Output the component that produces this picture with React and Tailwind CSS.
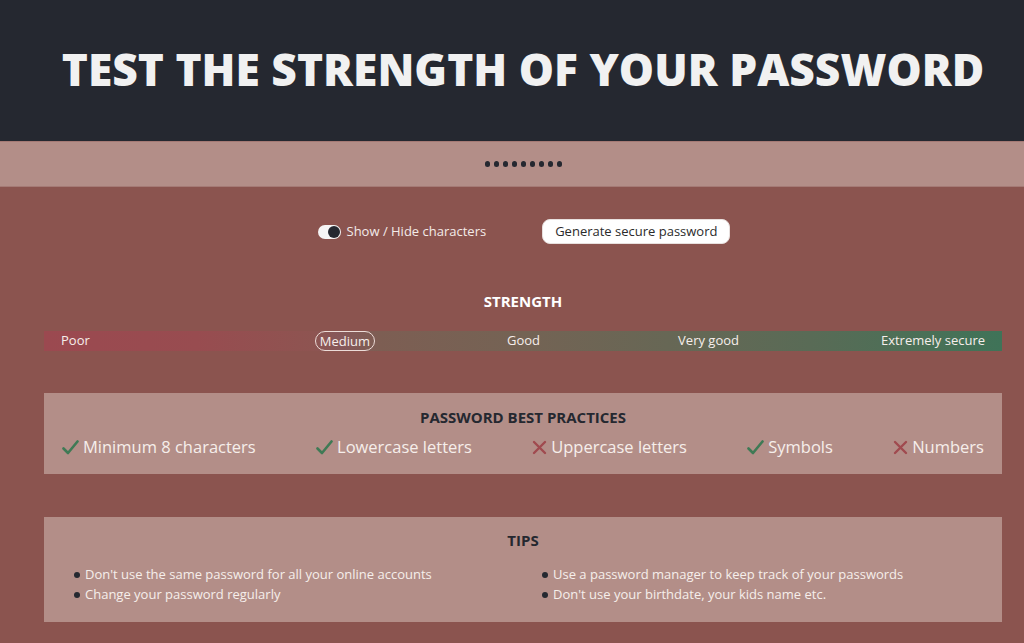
import React from "react";

const font = { fontFamily: '"Open Sans", "Noto Sans", sans-serif' };

function Check() {
  return (
    <svg width="17" height="15" viewBox="0 0 17 15" className="shrink-0">
      <path d="M1.5 8.5 L6 13 L15.5 1.5" fill="none" stroke="#3f7a55" strokeWidth="2.6" strokeLinecap="round" strokeLinejoin="round" />
    </svg>
  );
}

function Cross() {
  return (
    <svg width="15" height="15" viewBox="0 0 15 15" className="shrink-0">
      <path d="M2 2 L13 13 M13 2 L2 13" fill="none" stroke="#a04a4f" strokeWidth="2.4" strokeLinecap="round" />
    </svg>
  );
}

function Rule({ ok, label }) {
  return (
    <div className="flex items-center gap-[4px] text-[16.5px] text-[#f6eeeb]">
      {ok ? <Check /> : <Cross />}
      <span>{label}</span>
    </div>
  );
}

function Tip({ children }) {
  return (
    <li className="flex items-center gap-[5px] h-[20px]">
      <span className="w-[6px] h-[6px] rounded-full bg-[#252830] shrink-0" />
      <span>{children}</span>
    </li>
  );
}

export default function App() {
  return (
    <div className="w-[1024px] h-[643px] overflow-hidden bg-[#8b544f]" style={font}>
      <header className="h-[141px] bg-[#252830] flex items-center justify-center pl-[22px] pb-[2px]">
        <h1 className="text-[44.3px] font-extrabold text-[#f1f1f1] tracking-[0px] leading-none">
          TEST THE STRENGTH OF YOUR PASSWORD
        </h1>
      </header>

      <div className="h-[46px] bg-[#b38e88] border-t border-[#a57a75] border-b flex items-center justify-center gap-[4px] pl-[22px]">
        {Array.from({ length: 9 }).map((_, i) => (
          <span key={i} className="w-[5px] h-[6px] rounded-full bg-[#252830]" />
        ))}
      </div>

      <div className="pl-[22px]">
        <div className="flex items-center justify-center gap-[56px] mt-[32px] pl-[2px]">
          <label className="flex items-center gap-[6px] text-[13px] text-[#f3ebe9]">
            <span className="w-[23px] h-[14px] rounded-full bg-[#f5f5f5] flex items-center justify-end pr-[1px]">
              <span className="w-[12px] h-[12px] rounded-full bg-[#252830]" />
            </span>
            Show / Hide characters
          </label>
          <button className="h-[25px] px-[12px] rounded-[8px] bg-white text-[13px] text-[#2b2b2b] border border-[#e8e0de]">
            Generate secure password
          </button>
        </div>

        <h2 className="mt-[50px] text-center text-[15px] font-bold text-white leading-none">STRENGTH</h2>

        <div className="mx-[22px] mt-[22px] h-[20px] flex items-center text-[13px] text-[#f6eeeb] bg-[linear-gradient(90deg,#9b4950_0%,#984c50_16%,#8e5451_28%,#86585a_31%,#7d5e53_35%,#746354_50%,#676755_65%,#596b56_80%,#4a7057_92%,#3f7358_100%)]">
          <span className="ml-[17px]">Poor</span>
          <span className="ml-[225px] px-[4px] h-[20px] leading-[18px] rounded-full border border-[#ecdcd8]">Medium</span>
          <span className="ml-[132px]">Good</span>
          <span className="ml-[138px]">Very good</span>
          <span className="ml-auto mr-[17px]">Extremely secure</span>
        </div>

        <section className="mx-[22px] mt-[42px] h-[81px] bg-[#b38e88] pt-[17px]">
          <h3 className="text-center text-[15px] font-bold text-[#252830] leading-none">PASSWORD BEST PRACTICES</h3>
          <div className="flex items-center justify-between px-[18px] mt-[10px]">
            <Rule ok label="Minimum 8 characters" />
            <Rule ok label="Lowercase letters" />
            <Rule label="Uppercase letters" />
            <Rule ok label="Symbols" />
            <Rule label="Numbers" />
          </div>
        </section>

        <section className="mx-[22px] mt-[43px] h-[105px] bg-[#b38e88] pt-[16px]">
          <h3 className="text-center text-[15px] font-bold text-[#252830] leading-none">TIPS</h3>
          <div className="grid grid-cols-2 mt-[17px] text-[13px] text-[#f6eeeb]">
            <ul className="pl-[30px]">
              <Tip>Don't use the same password for all your online accounts</Tip>
              <Tip>Change your password regularly</Tip>
            </ul>
            <ul className="pl-[19px]">
              <Tip>Use a password manager to keep track of your passwords</Tip>
              <Tip>Don't use your birthdate, your kids name etc.</Tip>
            </ul>
          </div>
        </section>
      </div>
    </div>
  );
}
